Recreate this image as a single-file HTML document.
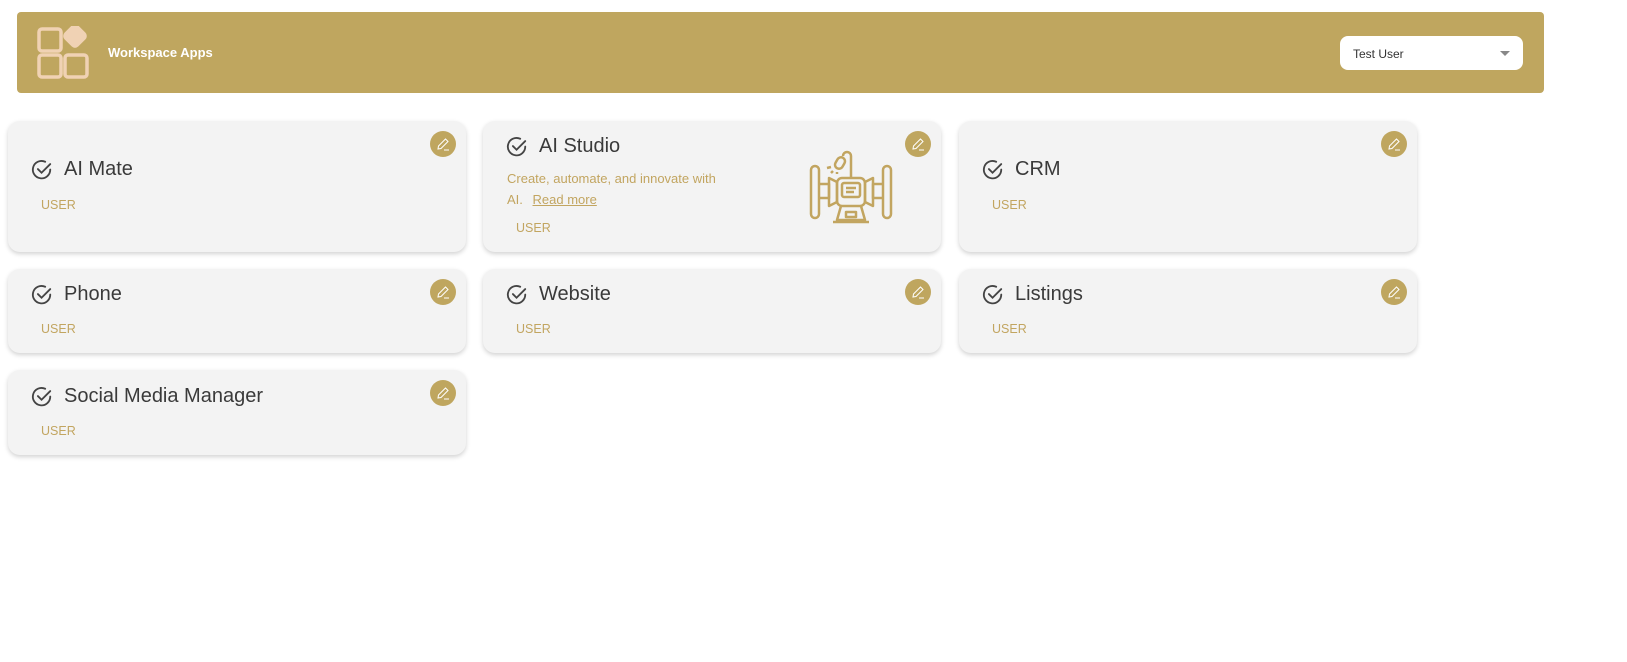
<!DOCTYPE html>
<html><head><meta charset="utf-8"><style>
*{box-sizing:border-box;margin:0;padding:0}
body{width:1627px;height:662px;background:#fff;font-family:"Liberation Sans",sans-serif;position:relative;overflow:hidden}
.hdr{position:absolute;left:17px;top:12px;width:1527px;height:81px;background:#bfa65f;border-radius:4px}
.hdr .t{position:absolute;left:91px;top:33px;color:#fff;font-size:13px;font-weight:bold}
.sel{position:absolute;left:1323px;top:24px;width:183px;height:34px;background:#fff;border-radius:8px;font-size:12px;color:#333;padding:11px 0 0 13px}
.sel:after{content:"";position:absolute;right:13px;top:15px;border:5px solid transparent;border-top-color:#888}
.card{position:absolute;width:458px;background:#f3f3f3;border-radius:12px;box-shadow:0 2px 5px rgba(0,0,0,.18)}
.ttl{position:absolute;left:23px;font-size:20px;color:#3a3a3a;display:flex;align-items:center;gap:11px;white-space:nowrap}
.ttl svg{flex:none}
.u{position:absolute;left:33px;font-size:12.5px;color:#c2a560}
.ed{position:absolute;right:10px;top:10px;width:26px;height:26px;border-radius:50%;background:#bfa65f}
.ed svg{position:absolute;left:6px;top:6px}
.desc{position:absolute;left:24px;top:47px;width:225px;font-size:13px;line-height:21px;color:#c2a560}
.desc u{margin-left:6px}
</style></head><body>
<div class="hdr">
<svg style="position:absolute;left:20px;top:14px" width="56" height="54" viewBox="0 0 56 54" fill="none" stroke="#f0d2b4" stroke-width="3.5"><rect x="2" y="3" width="22" height="22" rx="3"/><rect x="2" y="29" width="22" height="22" rx="3"/><rect x="28" y="29" width="22" height="22" rx="3"/><rect x="30" y="2" width="16" height="16" rx="3" transform="rotate(45 38 10)" fill="#f0d2b4"/></svg>
<div class="t">Workspace Apps</div>
<div class="sel">Test User</div>
</div>

<div class="card" style="left:8px;top:121px;height:131px">
<div class="ttl" style="top:37px"><svg width="22" height="22" viewBox="0 0 24 24" fill="none" stroke="#444" stroke-width="2" stroke-linecap="round"><path d="M21 11.5A9.5 9.5 0 1 1 15.5 3"/><path d="M7.5 11l4 4L21 5.5"/></svg>AI Mate</div>
<div class="u" style="top:77px">USER</div>
<div class="ed"><svg width="14" height="14" viewBox="0 0 14 14" fill="none" stroke="#fff" stroke-width="1"><path d="M2 12l.5-3L9.5 2l2.5 2.5-7 7z"/><path d="M8 13h5"/></svg></div>
</div>

<div class="card" style="left:483px;top:121px;height:131px">
<div class="ttl" style="top:14px"><svg width="22" height="22" viewBox="0 0 24 24" fill="none" stroke="#444" stroke-width="2" stroke-linecap="round"><path d="M21 11.5A9.5 9.5 0 1 1 15.5 3"/><path d="M7.5 11l4 4L21 5.5"/></svg>AI Studio</div>
<div class="desc">Create, automate, and innovate with AI. <u>Read more</u></div>
<div class="u" style="top:100px">USER</div>
<svg style="position:absolute;left:326px;top:27px" width="84" height="78" viewBox="0 0 84 78" fill="none" stroke="#c2a560" stroke-width="2.5" stroke-linejoin="round"><rect x="2" y="18" width="8" height="52" rx="4"/><rect x="74" y="18" width="8" height="52" rx="4"/><path d="M10 36h10v14H10M74 36H64v14h10"/><path d="M20 30l8 4v20l-8 4z"/><path d="M64 30l-8 4v20l8 4z"/><rect x="28" y="30" width="28" height="28" rx="5"/><rect x="33" y="35" width="18" height="14" rx="2"/><path d="M37 40h10M37 44h8"/><path d="M32 58l-4 14h28l-4-14M24 74h36"/><rect x="37" y="64" width="10" height="5"/><path d="M42 30V8a4 4 0 0 0-8 0"/><rect x="27" y="9" width="8" height="12" rx="4" transform="rotate(30 31 15)"/><path d="M18 20l4-1M22 25l2-2M28 26v-2"/></svg>
<div class="ed"><svg width="14" height="14" viewBox="0 0 14 14" fill="none" stroke="#fff" stroke-width="1"><path d="M2 12l.5-3L9.5 2l2.5 2.5-7 7z"/><path d="M8 13h5"/></svg></div>
</div>

<div class="card" style="left:959px;top:121px;height:131px">
<div class="ttl" style="top:37px"><svg width="22" height="22" viewBox="0 0 24 24" fill="none" stroke="#444" stroke-width="2" stroke-linecap="round"><path d="M21 11.5A9.5 9.5 0 1 1 15.5 3"/><path d="M7.5 11l4 4L21 5.5"/></svg>CRM</div>
<div class="u" style="top:77px">USER</div>
<div class="ed"><svg width="14" height="14" viewBox="0 0 14 14" fill="none" stroke="#fff" stroke-width="1"><path d="M2 12l.5-3L9.5 2l2.5 2.5-7 7z"/><path d="M8 13h5"/></svg></div>
</div>

<div class="card" style="left:8px;top:269px;height:84px">
<div class="ttl" style="top:14px"><svg width="22" height="22" viewBox="0 0 24 24" fill="none" stroke="#444" stroke-width="2" stroke-linecap="round"><path d="M21 11.5A9.5 9.5 0 1 1 15.5 3"/><path d="M7.5 11l4 4L21 5.5"/></svg>Phone</div>
<div class="u" style="top:53px">USER</div>
<div class="ed"><svg width="14" height="14" viewBox="0 0 14 14" fill="none" stroke="#fff" stroke-width="1"><path d="M2 12l.5-3L9.5 2l2.5 2.5-7 7z"/><path d="M8 13h5"/></svg></div>
</div>

<div class="card" style="left:483px;top:269px;height:84px">
<div class="ttl" style="top:14px"><svg width="22" height="22" viewBox="0 0 24 24" fill="none" stroke="#444" stroke-width="2" stroke-linecap="round"><path d="M21 11.5A9.5 9.5 0 1 1 15.5 3"/><path d="M7.5 11l4 4L21 5.5"/></svg>Website</div>
<div class="u" style="top:53px">USER</div>
<div class="ed"><svg width="14" height="14" viewBox="0 0 14 14" fill="none" stroke="#fff" stroke-width="1"><path d="M2 12l.5-3L9.5 2l2.5 2.5-7 7z"/><path d="M8 13h5"/></svg></div>
</div>

<div class="card" style="left:959px;top:269px;height:84px">
<div class="ttl" style="top:14px"><svg width="22" height="22" viewBox="0 0 24 24" fill="none" stroke="#444" stroke-width="2" stroke-linecap="round"><path d="M21 11.5A9.5 9.5 0 1 1 15.5 3"/><path d="M7.5 11l4 4L21 5.5"/></svg>Listings</div>
<div class="u" style="top:53px">USER</div>
<div class="ed"><svg width="14" height="14" viewBox="0 0 14 14" fill="none" stroke="#fff" stroke-width="1"><path d="M2 12l.5-3L9.5 2l2.5 2.5-7 7z"/><path d="M8 13h5"/></svg></div>
</div>

<div class="card" style="left:8px;top:370px;height:85px">
<div class="ttl" style="top:15px"><svg width="22" height="22" viewBox="0 0 24 24" fill="none" stroke="#444" stroke-width="2" stroke-linecap="round"><path d="M21 11.5A9.5 9.5 0 1 1 15.5 3"/><path d="M7.5 11l4 4L21 5.5"/></svg>Social Media Manager</div>
<div class="u" style="top:54px">USER</div>
<div class="ed"><svg width="14" height="14" viewBox="0 0 14 14" fill="none" stroke="#fff" stroke-width="1"><path d="M2 12l.5-3L9.5 2l2.5 2.5-7 7z"/><path d="M8 13h5"/></svg></div>
</div>
</body></html>
